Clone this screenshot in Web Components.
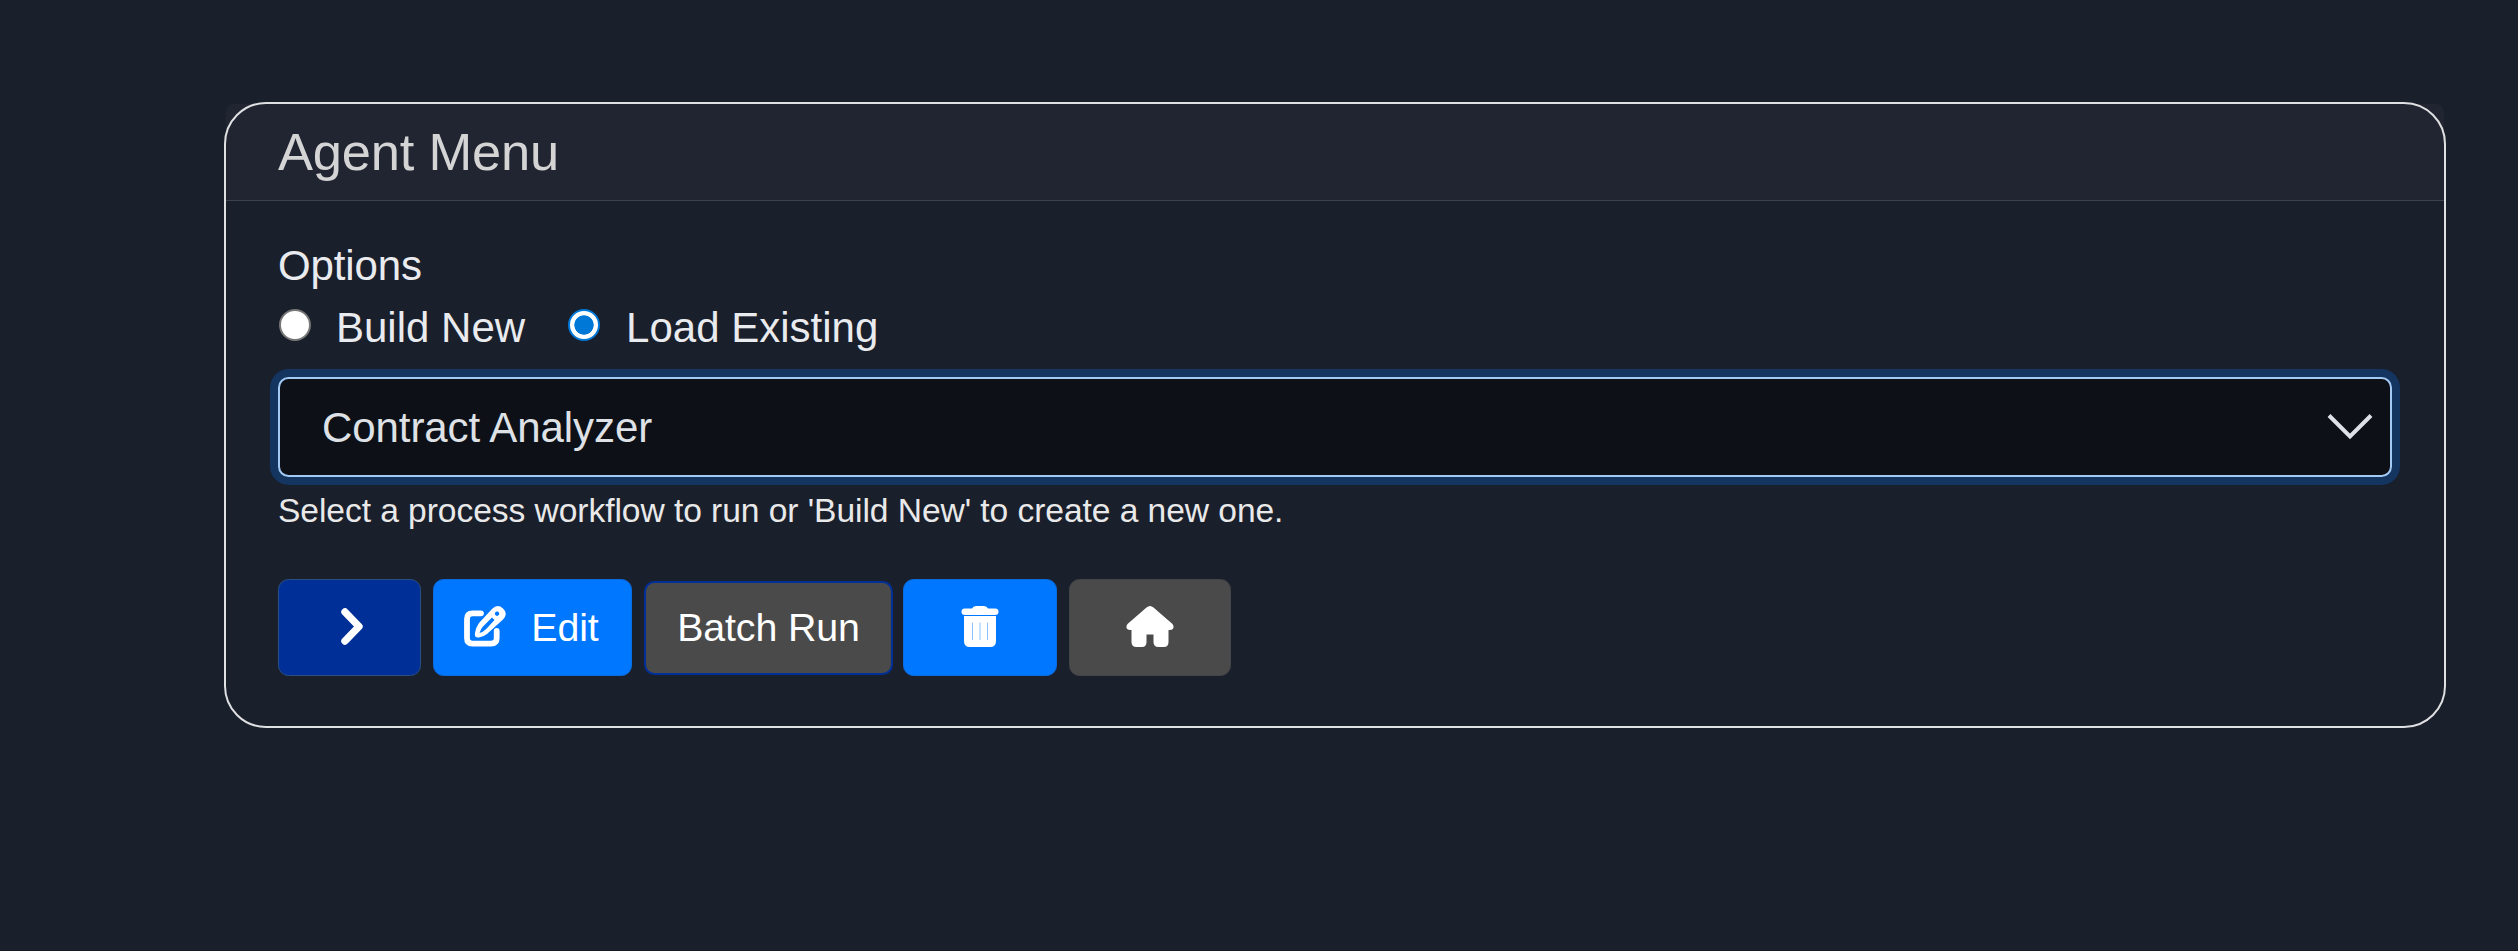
<!DOCTYPE html>
<html lang="en"><head><meta charset="utf-8"><title>Agent Menu</title>
<style>html,body{margin:0;height:100%}body{background:#1a1f2c;font-family:"Liberation Sans",Arial,sans-serif;overflow:hidden}</style></head>
<body><agent-app></agent-app>
<script>
function define(name, html){
  const t=document.createElement('template');t.innerHTML=html;
  customElements.define(name,class extends HTMLElement{
    constructor(){super();this.attachShadow({mode:'open'}).append(t.content.cloneNode(true));}
  });
}
define('menu-card',`<style>
:host{display:block;position:relative;box-sizing:border-box;width:2222px;height:626px;padding:2px}
:host::after{content:"";position:absolute;inset:0;border:2px solid #dfe0e2;border-radius:42px;pointer-events:none}
header{box-sizing:border-box;height:97px;padding:8px 52px;background:#212532;border-bottom:1px solid #3f424d;border-radius:8px 8px 0 0;color:#d4d4d5;font-size:52.5px;line-height:79px;letter-spacing:-.22px}
section{padding:34px 52px 0}
</style><header><slot name="title"></slot></header><section><slot></slot></section>`);
define('radio-option',`<style>
:host{display:flex;align-items:flex-start;color:#e9ebee;font-size:42px;line-height:63px}
i{box-sizing:border-box;width:32px;height:32px;margin:13px 25px 0 0;border-radius:50%;border:2.6px solid #767676;background:#fff}
:host([checked]) i{margin-right:26px;border-color:#0078d7;background:radial-gradient(circle,#0078d7 0 9.3px,#fff 10px)}
</style><i></i><slot></slot>`);
define('select-box',`<style>
:host{display:flex;align-items:center;justify-content:space-between;box-sizing:border-box;height:100px;margin-top:18px;padding:0 17px 0 42px;border:2px solid #a3c9f5;border-radius:10.5px;background:#0d1017;box-shadow:0 0 0 8px #13355f;color:#dee2e6;font-size:42px;line-height:63px;letter-spacing:-.08px}
svg{display:block;width:46px;height:26px}
</style><span><slot></slot></span><svg viewBox="0 0 46 26"><path d="M2 1.5 23 22.5 44 1.5" fill="none" stroke="#dee2e6" stroke-width="4"/></svg>`);
define('action-button',`<style>
:host{display:flex;align-items:center;justify-content:center;box-sizing:border-box;width:var(--w);height:97px;border:1px solid var(--line);border-radius:10.5px;background:var(--fill);color:#fff;font-size:39.375px;line-height:59px;letter-spacing:-.12px}
</style><slot></slot>`);
const icons={
chevron:[24,38,'<path d="M4 4 18 18.5 4 33" fill="none" stroke="#fff" stroke-width="7.4" stroke-linecap="round" stroke-linejoin="round"/>'],
edit:[44,44,'<path d="M18 8.3H9.5Q4 8.3 4 14V33Q4 38.7 9.5 38.7H28Q33.7 38.7 33.7 33V26" fill="none" stroke="#fff" stroke-width="5.8" stroke-linecap="round"/><path fill="#fff" fill-rule="evenodd" d="M29 4Q34.5-1.5 40 3.5T40 14.500L24 29Q21 31.500 16 32.500Q11 33 12 28Q13 22 16 18ZM34 6.500A2.200 2.200 0 1 0 34.100 6.500ZM29 12.500 20 21.500Q17.500 24 16.500 28Q20 27 23 24.200L31.500 15Z"/>'],
trash:[38,42,'<path fill="#fff" d="M11 2.500Q12 0 15 0H23Q26 0 27 2.500H34Q37.500 2.500 37.500 5.700T34 9H4Q.500 9 .500 5.700T4 2.500ZM3 10H35V35Q35 41 29 41H9Q3 41 3 35Z"/><path d="M11.500 16.500V34M19 16.500V34M26.500 16.500V34" stroke="#8bc4ff" stroke-width="1"/>'],
home:[48,42,'<path fill="#fff" d="M20.500 1.500Q24 -1.500 27.500 1.500L46.500 18Q48.500 21 46.800 23Q45.500 24.300 42.500 24V36Q42.500 41 38 41H32.500Q27.500 41 27.500 36V28.500H20.500V36Q20.500 41 16 41H10.500Q5.500 41 5.500 36V24Q2.500 24.300 1.200 23Q-.500 21 1.500 18Z"/>']};
customElements.define('glyph-icon',class extends HTMLElement{
  constructor(){super();this.attachShadow({mode:'open'});}
  connectedCallback(){
    const [w,h,p]=icons[this.getAttribute('name')];
    this.shadowRoot.innerHTML=`<style>:host{display:block}svg{display:block;overflow:visible}</style><svg width="${w}" height="${h}" viewBox="0 0 ${w} ${h}">${p}</svg>`;
  }
});
define('agent-app',`<style>
:host{display:block;box-sizing:border-box;height:951px;padding:102px 0 0 224px;border-bottom:1px solid #171a25}
.label{color:#e9ebee;font-size:42px;line-height:62px;margin-bottom:-1px;letter-spacing:-.12px}
.radios{display:flex;gap:43px;height:63px;padding-left:1px}
.help{margin-top:9px;color:#e9e9e9;font-size:33.6px;line-height:50px;letter-spacing:-.06px}
.actions{display:flex;align-items:flex-start;margin-top:43px}
.go{--w:143px;--fill:#002f97;--line:#2a4f80;margin-right:12px}
.edit{--w:199px;--fill:#0077ff;--line:#0b6ce0;margin-right:12px;padding-right:3px}
.batch{--w:249px;--fill:#4a4a4a;--line:#002f97;height:94px;margin:2px 10px 0 0;border-width:2px;padding-bottom:1px}
.del{--w:154px;--fill:#0077ff;--line:#0b6ce0;margin-right:12px}
.home{--w:162px;--fill:#4a4a4a;--line:#444548}
glyph-icon{margin-top:-1px}
.edit glyph-icon{margin-right:24px}
.go glyph-icon{margin:-2px 0 0 7px}
</style>
<menu-card><span slot="title">Agent Menu</span>
<div class="label">Options</div>
<div class="radios"><radio-option>Build New</radio-option><radio-option checked>Load Existing</radio-option></div>
<select-box>Contract Analyzer</select-box>
<div class="help">Select a process workflow to run or 'Build New' to create a new one.</div>
<div class="actions">
<action-button class="go"><glyph-icon name="chevron"></glyph-icon></action-button>
<action-button class="edit"><glyph-icon name="edit"></glyph-icon><span>Edit</span></action-button>
<action-button class="batch">Batch Run</action-button>
<action-button class="del"><glyph-icon name="trash"></glyph-icon></action-button>
<action-button class="home"><glyph-icon name="home"></glyph-icon></action-button>
</div></menu-card>`);
</script></body></html>
